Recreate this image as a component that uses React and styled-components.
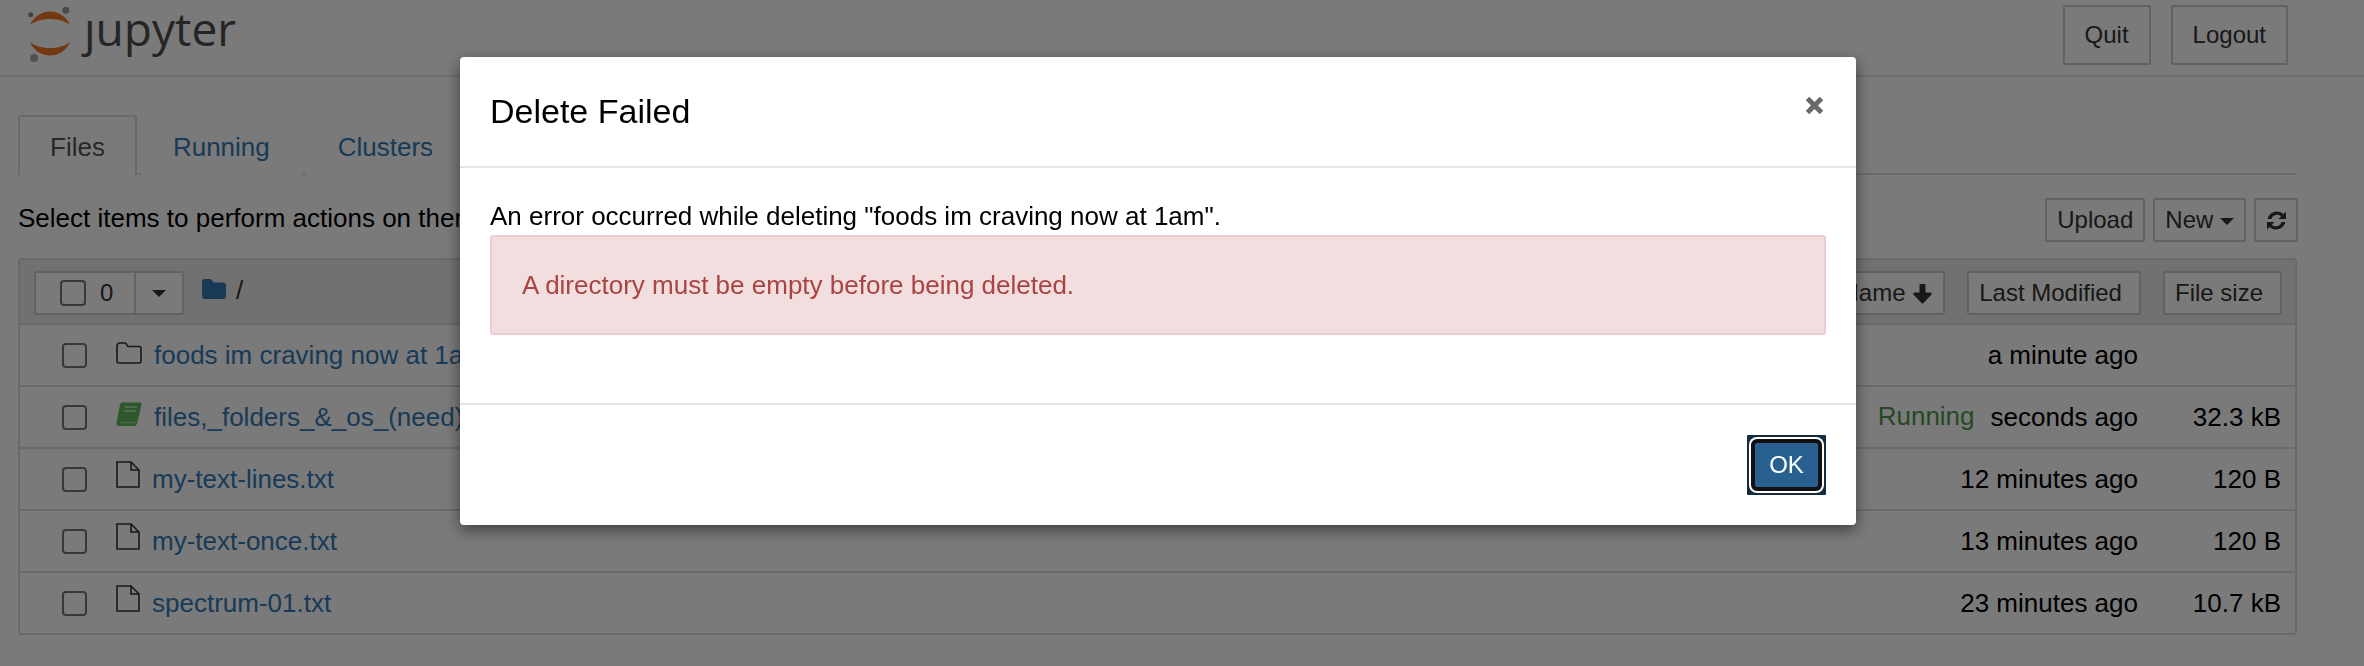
import styled, { createGlobalStyle } from "styled-components"

const GlobalStyle = createGlobalStyle`
  html, body {
    margin: 0;
    padding: 0;
    height: 666px;
    overflow: hidden;
    background: #fff;
    font-family: "Liberation Sans", Arial, sans-serif;
    font-size: 26px;
    line-height: 34px;
    color: #000;
  }
  * { box-sizing: border-box; }
`

const files = [
  { name: "foods im craving now at 1am", icon: "folder", modified: "a minute ago", size: "" },
  { name: "files,_folders_&_os_(need)", icon: "book", modified: "seconds ago", size: "32.3 kB", running: true },
  { name: "my-text-lines.txt", icon: "file", modified: "12 minutes ago", size: "120 B" },
  { name: "my-text-once.txt", icon: "file", modified: "13 minutes ago", size: "120 B" },
  { name: "spectrum-01.txt", icon: "file", modified: "23 minutes ago", size: "10.7 kB" },
]

// Space above and width taken by each kind of row icon.
const iconSlots = {
  folder: { top: 17, width: 38 },
  book: { top: 15, width: 38 },
  file: { top: 12, width: 36 },
}

function Logo() {
  return (
    <svg width="48" height="60" viewBox="0 0 48 60">
      <path d="M4 21 C12 3 36 3 44 21 C34 13 14 13 4 21 Z" fill="#f37726" />
      <path d="M4 38 C12 56 36 56 44 38 C34 46 14 46 4 38 Z" fill="#f37726" />
      <circle cx="39.7" cy="6.3" r="3.5" fill="#9e9e9e" />
      <circle cx="4.7" cy="10.7" r="2.5" fill="#8a8a8a" />
      <circle cx="8" cy="54" r="4" fill="#a8a8a8" />
    </svg>
  )
}

function RowIcon({ kind }) {
  if (kind === "folder") {
    return (
      <svg width="26" height="22" viewBox="0 0 26 22">
        <path d="M1 4 Q1 1 4 1 H9.5 L12 4.5 H23 Q25 4.5 25 6.5 V19 Q25 21 23 21 H3 Q1 21 1 19 Z" fill="none" stroke="#333" strokeWidth="1.6" />
      </svg>
    )
  }
  if (kind === "book") {
    return (
      <svg width="26" height="24" viewBox="0 0 26 24">
        <path d="M6 0.5 H24 Q26 0.5 25.5 3 L21 21.5 Q20.5 24 18 24 H3 Q0 24 0.5 20.5 L4 3 Q4.5 0.5 6 0.5 Z" fill="#5cb85c" />
        <path d="M4 19.5 H20.5 L20 21.5 H4 Z" fill="#fff" opacity="0.35" />
        <path d="M9 5 H21 M8.2 9 H20" stroke="#fff" strokeWidth="1.6" opacity="0.65" />
      </svg>
    )
  }
  return (
    <svg width="24" height="27" viewBox="0 0 24 27">
      <path d="M1 1 H15 L23 9 V26 H1 Z M15 1 V9 H23" fill="none" stroke="#333" strokeWidth="1.6" />
    </svg>
  )
}

function RefreshIcon() {
  return (
    <svg width="21" height="21" viewBox="0 0 21 21">
      <path d="M20 1.5 V9 H12.5 L15.2 6.3 C12 3.4 6.8 4.6 5.3 9 H1.6 C3.2 2 11.5 -1 17.4 4.1 Z" fill="#333" />
      <path d="M1 19.5 V12 H8.5 L5.8 14.7 C9 17.6 14.2 16.4 15.7 12 H19.4 C17.8 19 9.5 22 3.6 16.9 Z" fill="#333" />
    </svg>
  )
}

function ArrowDown() {
  return (
    <SortArrow width="21" height="20" viewBox="0 0 21 20">
      <path d="M7.5 1 Q7.5 0 8.5 0 H12.5 Q13.5 0 13.5 1 V8.5 H18 Q20 8.5 20 10 L11.5 19 Q10.5 20 9.5 19 L1 10 Q1 8.5 3 8.5 H7.5 Z" fill="#333" />
    </SortArrow>
  )
}

function App() {
  return (
    <>
      <GlobalStyle />
      <Page>
        <Header>
          <Brand>
            <Logo />
            <BrandName>ȷupyter</BrandName>
          </Brand>
          <HeaderButtons>
            <LoginButton>Quit</LoginButton>
            <LoginButton>Logout</LoginButton>
          </HeaderButtons>
        </Header>
        <Main>
          <Tabs>
            <Tab $active>Files</Tab>
            <Tab>Running</Tab>
            <Tab>Clusters</Tab>
          </Tabs>
          <ActionRow>
            <ActionText>Select items to perform actions on them.</ActionText>
            <ActionButtons>
              <SmallButton>Upload</SmallButton>
              <SmallButton>New <Caret /></SmallButton>
              <IconButton aria-label="Refresh"><RefreshIcon /></IconButton>
            </ActionButtons>
          </ActionRow>
          <List>
            <ListHeader>
              <HeaderLeft>
                <SelectGroup>
                  <SelectCount><SelectBox />0</SelectCount>
                  <SelectCaret><Caret /></SelectCaret>
                </SelectGroup>
                <Crumb>
                  <svg width="24" height="20" viewBox="0 0 24 20">
                    <path d="M0 3 Q0 0 3 0 H8 Q10 0 11 2.5 L11.5 3.5 H21 Q24 3.5 24 6.5 V17 Q24 20 21 20 H3 Q0 20 0 17 Z" fill="#337ab7" />
                  </svg>
                  <CrumbSlash>/</CrumbSlash>
                </Crumb>
              </HeaderLeft>
              <HeaderRight>
                <NameSort>Name <ArrowDown /></NameSort>
                <SortButton>Last Modified</SortButton>
                <SortButton>File size</SortButton>
              </HeaderRight>
            </ListHeader>
            {files.map(file => (
              <Row key={file.name}>
                <RowCheck />
                <IconSlot $top={iconSlots[file.icon].top} $width={iconSlots[file.icon].width}>
                  <RowIcon kind={file.icon} />
                </IconSlot>
                <FileLink>{file.name}</FileLink>
                {file.running && <RunningLabel>Running</RunningLabel>}
                <span>{file.modified}</span>
                <Size>{file.size}</Size>
              </Row>
            ))}
          </List>
        </Main>
      </Page>
      <Backdrop />
      <Dialog>
        <DialogHeader>
          <DialogTitle>Delete Failed</DialogTitle>
          <CloseButton aria-label="Close">
            <svg width="19" height="19" viewBox="0 0 19 19">
              <path d="M2.5 2.5 L16.5 16.5 M16.5 2.5 L2.5 16.5" stroke="#6a6a6a" strokeWidth="5" />
            </svg>
          </CloseButton>
        </DialogHeader>
        <DialogBody>
          <div>An error occurred while deleting "foods im craving now at 1am".</div>
          <Alert>A directory must be empty before being deleted.</Alert>
        </DialogBody>
        <DialogFooter>
          <OkFrame>
            <OkButton>OK</OkButton>
          </OkFrame>
        </DialogFooter>
      </Dialog>
    </>
  )
}

const Page = styled.div`
  width: 2364px;
`

const Header = styled.header`
  height: 77px;
  border-bottom: 2px solid #e7e7e7;
  display: flex;
  justify-content: space-between;
  padding: 0 76px 0 26px;
`

const Brand = styled.div`
  display: flex;
  align-items: flex-start;
  gap: 10px;
  padding-top: 4px;
`

const BrandName = styled.span`
  font-family: "Open Sans", sans-serif;
  font-size: 46px;
  line-height: 46px;
  color: #4e4e4e;
  margin-top: 1px;
`

const HeaderButtons = styled.div`
  display: flex;
  gap: 20px;
  padding-top: 5px;
`

const LoginButton = styled.button`
  height: 60px;
  padding: 0 20px;
  background: #fff;
  border: 2px solid #ccc;
  border-radius: 2px;
  font-family: inherit;
  font-size: 24px;
  color: #333;
`

const Main = styled.main`
  padding: 38px 0 0 18px;
  width: 2298px;
`

const Tabs = styled.nav`
  display: flex;
  height: 60px;
  margin-right: 1px;
  border-bottom: 2px solid #ddd;
`

const Tab = styled.div`
  height: 60px;
  padding: 2px 30px 0;
  display: flex;
  align-items: center;
  color: ${props => (props.$active ? "#555" : "#337ab7")};
  background: #fff;
  border: 2px solid ${props => (props.$active ? "#ddd" : "transparent")};
  border-bottom: 0;
  border-radius: 3px 3px 0 0;
  margin-right: 4px;
`

const ActionRow = styled.div`
  height: 83px;
  padding-top: 23px;
  display: flex;
  justify-content: space-between;
`

const ActionText = styled.span`
  line-height: 40px;
`

const ActionButtons = styled.div`
  display: flex;
  gap: 8px;
  height: 44px;
`

const SmallButton = styled.button`
  height: 44px;
  padding: 0 10px;
  background: #fff;
  border: 2px solid #ccc;
  border-radius: 2px;
  font-family: inherit;
  font-size: 24px;
  color: #333;
  white-space: nowrap;
`

const IconButton = styled(SmallButton)`
  width: 44px;
  padding: 0;
  display: flex;
  align-items: center;
  justify-content: center;
`

const Caret = styled.span`
  display: inline-block;
  width: 0;
  height: 0;
  vertical-align: middle;
  border-top: 7px solid #333;
  border-left: 7.5px solid transparent;
  border-right: 7.5px solid transparent;
`

const SortArrow = styled.svg`
  vertical-align: -3px;
`

const List = styled.section`
  width: 2279px;
  border: 2px solid #ddd;
  border-radius: 3px;
`

const ListHeader = styled.div`
  height: 65px;
  background: #ececec;
  border-bottom: 2px solid #ddd;
  display: flex;
  justify-content: space-between;
  padding: 11px 13px 0 14px;
`

const HeaderLeft = styled.div`
  display: flex;
  gap: 18px;
`

const HeaderRight = styled.div`
  display: flex;
  gap: 22px;
`

const SelectGroup = styled.div`
  display: flex;
  width: 150px;
  height: 44px;
  border: 2px solid #ccc;
  border-radius: 2px;
  background: #fff;
`

const SelectCount = styled.div`
  width: 98px;
  display: flex;
  align-items: center;
  gap: 14px;
  padding-left: 24px;
  font-size: 24px;
  color: #333;
`

const SelectBox = styled.span`
  display: block;
  flex: none;
  width: 26px;
  height: 26px;
  border: 2px solid #767676;
  border-radius: 4px;
  background: #fff;
`

const SelectCaret = styled.div`
  flex: 1;
  border-left: 2px solid #ccc;
  display: flex;
  align-items: center;
  justify-content: center;
`

const Crumb = styled.div`
  display: flex;
  gap: 10px;
  align-items: flex-start;
  padding-top: 8px;
`

const CrumbSlash = styled.span`
  line-height: 22px;
  color: #333;
`

const SortButton = styled(SmallButton)`
  padding: 0 17px 0 10px;
`

const NameSort = styled(SmallButton)`
  padding: 0 10px;
`

const Row = styled.div`
  height: 62px;
  border-bottom: 2px solid #ddd;
  display: flex;
  align-items: center;
  padding-left: 42px;

  &:last-child {
    border-bottom: 0;
    height: 60px;
  }
`

const RowCheck = styled(SelectBox)`
  width: 25px;
  height: 25px;
`

const IconSlot = styled.span`
  flex: none;
  align-self: flex-start;
  display: block;
  width: ${props => props.$width}px;
  margin-left: 29px;
  padding-top: ${props => props.$top}px;

  svg {
    display: block;
  }
`

const FileLink = styled.span`
  flex: 1;
  color: #337ab7;
`

const RunningLabel = styled.span`
  color: #4d9a4d;
  margin-right: 16px;
  margin-top: -2px;
`

const Size = styled.span`
  flex: none;
  width: 157px;
  padding-right: 14px;
  text-align: right;
`

const Backdrop = styled.div`
  position: fixed;
  inset: 0;
  background: rgba(0, 0, 0, 0.52);
`

const Dialog = styled.div`
  position: fixed;
  left: 460px;
  top: 57px;
  width: 1396px;
  height: 468px;
  background: #fff;
  border-radius: 4px;
  box-shadow: 0 5px 15px rgba(0, 0, 0, 0.5);
  display: flex;
  flex-direction: column;
`

const DialogHeader = styled.div`
  height: 111px;
  border-bottom: 2px solid #e5e5e5;
  display: flex;
  justify-content: space-between;
  padding: 0 32px 2px 30px;
  align-items: center;
`

const DialogTitle = styled.h4`
  margin: 0;
  font-size: 34px;
  font-weight: 400;
  line-height: 40px;
`

const CloseButton = styled.span`
  display: flex;
  margin-top: -10px;
`

const DialogBody = styled.div`
  flex: 1;
  padding: 31px 30px 0;
`

const Alert = styled.div`
  height: 100px;
  margin-top: 2px;
  padding: 0 30px;
  display: flex;
  align-items: center;
  background: #f2dede;
  border: 2px solid #ebccd1;
  border-radius: 3px;
  color: #a94442;
`

const DialogFooter = styled.div`
  height: 122px;
  border-top: 2px solid #e5e5e5;
  display: flex;
  justify-content: flex-end;
  align-items: flex-start;
  padding: 30px 30px 0;
`

const OkFrame = styled.div`
  width: 79px;
  height: 60px;
  padding: 4px;
  background: #122b40;
  border-radius: 1px;
`

const OkButton = styled.button`
  display: block;
  width: 100%;
  height: 100%;
  padding: 0;
  background: #286090;
  border: 4px solid #111;
  border-radius: 6px;
  box-shadow: 0 0 0 2px #fff;
  color: #fff;
  font-family: inherit;
  font-size: 24px;
`

export default App
